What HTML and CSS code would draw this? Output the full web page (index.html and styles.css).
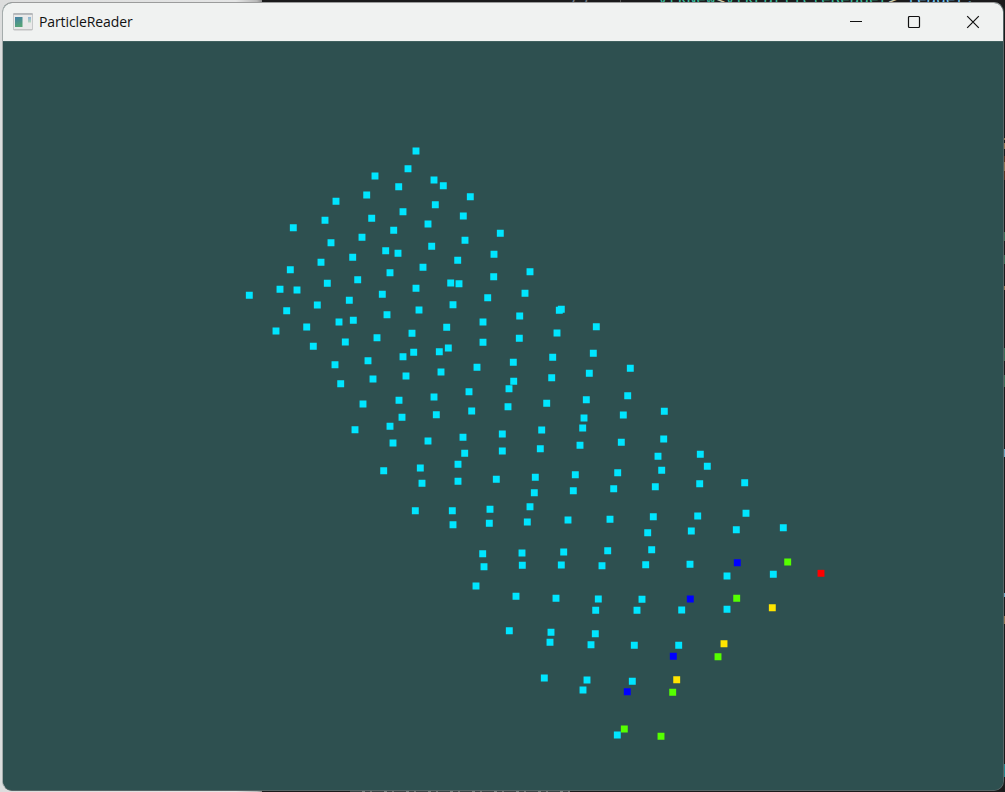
FILE: index.html
```html
<!DOCTYPE html>
<html lang="en">
<head>
<meta charset="utf-8">
<title>ParticleReader</title>
<link rel="stylesheet" href="styles.css">
</head>
<body>
<div class="desktop">
  <div class="backdrop-light"></div>
  <div class="editor">
    <div class="code code-top"><span class="line-no">73</span><span class="guide"></span><span class="statement"><span class="type">vtkNew</span><span class="punct">&lt;</span><span class="type">vtkParticleReader</span><span class="punct">&gt;</span> <span class="var">reader;</span></span></div>
    <i class="mark tan" style="top:138px;height:2px"></i>
    <i class="mark tan" style="top:143px;height:6px"></i>
    <i class="mark brown" style="top:156px;height:24px"></i>
    <i class="mark tan" style="top:162px;height:9px"></i>
    <i class="mark green" style="top:232px;height:9px"></i>
    <i class="mark green" style="top:255px;height:9px"></i>
    <i class="mark tan" style="top:286px;height:4px"></i>
    <i class="mark green" style="top:348px;height:13px"></i>
    <i class="mark green" style="top:375px;height:12px"></i>
    <i class="mark blue" style="top:449px;height:8px"></i>
    <i class="mark blue" style="top:593px;height:4px"></i>
    <i class="mark tan" style="top:616px;height:8px"></i>
    <i class="mark teal" style="top:764px;height:13px"></i>
  </div>
  <main class="window">
    <header class="titlebar">
      <svg class="app-icon" width="20" height="18" viewBox="0 0 20 18">
        <defs>
          <linearGradient id="pane" x1="0" y1="0" x2="0.3" y2="1"><stop offset="0" stop-color="#4580a8"/><stop offset="1" stop-color="#55a377"/></linearGradient>
          <linearGradient id="side" x1="0" y1="0" x2="0" y2="1"><stop offset="0" stop-color="#8eb2d6"/><stop offset="1" stop-color="#b5d6bc"/></linearGradient>
        </defs>
        <rect x=".5" y=".7" width="19" height="16.3" rx="1" fill="#e9e9e9" stroke="#c7c8c9"/>
        <path d="M.3 1h19.4" stroke="#aaaeb2" stroke-width="1.4"/>
        <path d="M.5 16.6h19" stroke="#bfc0c1"/>
        <rect x="2" y="4" width="7.5" height="10" fill="url(#pane)"/>
        <rect x="15" y="4" width="3" height="5.5" fill="url(#side)"/>
      </svg>
      <span class="title">ParticleReader</span>
      <div class="controls">
        <svg width="14" height="14" viewBox="0 0 14 14"><path d="M2 6.5h12"/></svg>
        <svg width="14" height="14" viewBox="0 0 14 14"><rect x="1.5" y="1.5" width="11" height="11" rx="1"/></svg>
        <svg width="14" height="14" viewBox="0 0 14 14"><path d="M1.2 1.2l11.6 11.6M12.8 1.2L1.2 12.8"/></svg>
      </div>
    </header>
    <svg class="viewport" id="viewport" viewBox="3 41 1000 750"></svg>
  </main>
  <div class="bottom-edge"></div>
</div>
<script src="particles.js"></script>
</body>
</html>
```

FILE: styles.css
```css
* { box-sizing: border-box; }
body { margin: 0; overflow: hidden; font-family: "Open Sans", "Noto Sans", sans-serif; }
.desktop { position: relative; width: 1005px; height: 792px; padding: 2px 1px 0 2px; background: #1b1b1c; overflow: hidden; }
.backdrop-light { position: absolute; left: 0; top: 0; width: 262px; height: 792px; background: linear-gradient(90deg, #dcdddd 0, #e4e5e5 90%, #b8b8b8 98%, #8b8b8b 100%); }
.editor { position: absolute; inset: 0 0 0 262px; }
.code { position: absolute; left: 0; right: 0; font: 16px/20px "DejaVu Sans Mono", monospace; white-space: pre; }
.code-top { top: -11px; height: 20px; }
.line-no { position: absolute; left: 307px; color: #6e7681; }
.guide { position: absolute; left: 358px; top: 0; width: 1px; height: 20px; background: #555; }
.statement { position: absolute; left: 396px; color: #d4d4d4; letter-spacing: -.04px; }
.type { color: #39bd9e; }
.punct { color: #c9c9a6; }
.var { color: #72c8f4; }
.mark { position: absolute; right: 0; width: 2px; }
.tan { background: #927653; }
.brown { background: #593421; }
.green { background: #3d6c55; }
.blue { background: #6aa5bf; }
.teal { background: #23878c; }
.window { position: relative; display: flex; flex-direction: column; width: 1002px; height: 789px; border: 1px solid #566566; border-left-color: #a5acac; border-top-color: #9b9c9c; border-radius: 10px; overflow: hidden; background: #2e5050; }
.titlebar { display: flex; align-items: center; flex: 0 0 38px; padding: 0 23px 0 10px; background: #f0f2f1; }
.app-icon { display: block; margin-top: -1px; }
.title { margin-left: 6px; font-size: 14px; line-height: 20px; color: #111; white-space: nowrap; letter-spacing: -.1px; }
.controls { display: flex; gap: 45px; margin-left: auto; }
.controls svg { display: block; fill: none; stroke: #111; stroke-width: 1.2; overflow: visible; }
.viewport { display: block; flex: none; width: 1000px; height: 750px; background: #2e5050; box-shadow: inset 0 1px #416160; }
.particles { fill: none; stroke-width: 6.9; stroke-linecap: square; }
.cyan { stroke: #00e5ff; }
.indigo { stroke: #0000ff; }
.lime { stroke: #55ff00; }
.yellow { stroke: #ffe500; }
.red { stroke: #ff0000; }
.bottom-edge { position: absolute; left: 350px; bottom: 0; width: 220px; height: 1px; background: repeating-linear-gradient(90deg, #3a4344 0 12px, #75807d 12px 15px, #3a4344 15px 20px, #6c7472 20px 22px); }
```

FILE: particles.js
```js
// Particle positions grouped by scalar colour.
const groups = {
  cyan: `416,151 408,168.7 375,176 434,180 398.7,186.7 366.7,195 336,201.3 435.3,204.7 403,211.7 371.7,218.3
325,220.3 293.3,227.7 428,224 393.7,230.3 362,237.3 331,242.7 431.7,246.3 385.7,250.7 398,253.3 352.7,257.3
321,262.3 423,267.3 290.3,269.7 390,272.7 357.7,279.7 327.3,283.3 416,288.3 280,289.3 297,290 382.3,294.3
249.3,295.3 349.3,300.3 317.3,305 443.3,185.7 470.3,196.7 463.3,216 500.3,233.3 465,240.3 494,254.3 457.7,260.3
530,271.7 493.7,276.7 450.7,283 459,283.7 525,293.3 487.7,297.7 453,304.7 419,310 559.3,310.3 561.3,309.3
483,322 519.7,316 446.7,327.3 596.3,326.7 412,333.3 557,333 519.3,338.3 483,342.3 286.7,310.7 276,331
306.7,327 339,322 353.3,320.3 387,314.7 313.3,346.3 345.3,342 377,337.7 335,364.7 368,360.7 403,356.7
413.7,352.3 439.3,351.7 448.3,348 340.7,383.7 373,379 406,376 441,372 363,404 399,400.3 434,397
402,417.3 436.3,414.7 355,429.7 390,426.3 393,443 428,441 383.7,470.7 420.3,468 422,483.3 415.3,510.7
477,367.3 513.3,362.3 552.7,357.3 593.3,353.3 513.7,381.3 551.7,377.7 589.3,373.3 630.3,368.3 469,391.7 509,388.7
627.7,395.7 508,406.7 546.7,403.3 586.3,399.7 471.7,411 584,418 623.3,415 664.3,411.3 463,437.3 502.3,434
541.7,430 582.7,428 621.3,442.3 663.7,439 464.7,453.3 502.3,451 540.3,448.7 580,445.3 658,456.3 458,464.3
458,481.3 496.3,479.3 535.3,477.3 575.3,474.7 617.7,472.7 661.7,470.3 534.3,492.7 573.3,490.7 613.7,488.7 655.3,486.7
452.3,510.7 490,509.3 530,506.7 453,524.7 489.3,523.3 527.3,522 568,520 610,519.3 653.3,516.7 647.7,532.7
482.7,553.7 522,553 563.7,552 607.7,550.7 651.7,549.7 484,566.7 522.3,565.3 561.3,565 602,565.7 645.7,564.7
476,586 516,596.3 556,598.3 598.3,599 642,599.3 595.7,610.3 637,610.3 700.3,454.3 707.3,466.3 699.7,483.7
744.7,482.7 697.7,516 746,513.3 691.3,531 736.3,529.7 783.3,527.7 690,564.3 727,576 773.3,574.3 681.7,610
727,609.3 509.3,630.7 551,632.3 595.3,633.7 550,642.3 591,644.7 634.3,645.3 678.7,645.3 544.3,678 587,680
583,690 632.3,681.3 617.3,735`,
  indigo: "737.3,562.7 690.3,599 673.3,656.3 627.3,691.7",
  lime: "787.7,562 736.7,598.3 718,656.7 672.7,692.3 624.3,729 661,736.3",
  yellow: "772.3,607.7 724,643.7 676.7,679.7",
  red: "821,573.3"
};
const view = document.getElementById("viewport");
for (const [name, list] of Object.entries(groups)) {
  const path = document.createElementNS("http://www.w3.org/2000/svg", "path");
  path.setAttribute("class", "particles " + name);
  path.setAttribute("d", list.trim().split(/\s+/).map(p => `M${p}h.01`).join(""));
  view.appendChild(path);
}
```
